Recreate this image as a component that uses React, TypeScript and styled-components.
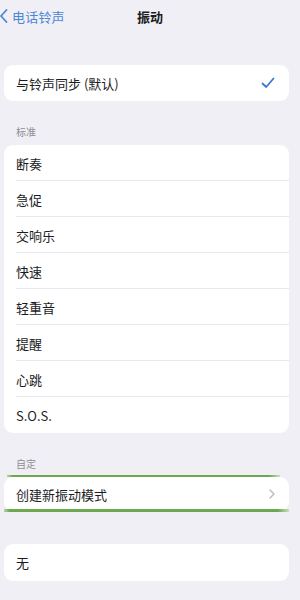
import styled, { createGlobalStyle } from "styled-components";

const GlobalStyle = createGlobalStyle`
  html, body {
    margin: 0;
    padding: 0;
    background: #f0eff5;
  }
  body {
    font-family: "Noto Sans CJK SC", "Liberation Sans", sans-serif;
    -webkit-font-smoothing: antialiased;
  }
`;

const Page = styled.div`
  width: 300px;
  height: 600px;
  overflow: hidden;
  background: #f0eff5;
  display: flex;
  flex-direction: column;
  padding: 0 11px 0 4px;
  box-sizing: border-box;
`;

const NavBar = styled.div`
  height: 32px;
  display: flex;
  align-items: center;
  position: relative;
  margin-left: -4px;
`;

const BackLink = styled.div`
  display: flex;
  align-items: center;
  gap: 4px;
  color: #4a86d6;
  font-size: 13px;
  letter-spacing: 0.2px;
`;

const NavTitle = styled.div`
  position: absolute;
  left: 0;
  right: -11px;
  text-align: center;
  font-size: 13px;
  font-weight: 700;
  color: #1c1c1e;
  pointer-events: none;
`;

const Card = styled.div<{ $top: number }>`
  margin-top: ${(p) => p.$top}px;
  background: #ffffff;
  border-radius: 9px;
  overflow: hidden;
`;

const Row = styled.div<{ $h?: number }>`
  height: ${(p) => p.$h ?? 36}px;
  display: flex;
  align-items: center;
  padding: 0 14px 0 12px;
  position: relative;
  font-size: 13px;
  color: #1c1c1e;

  & + & {
    border-top: 1px solid #e8e8ed;
    margin-left: 12px;
    padding-left: 0;
    margin-top: -1px;
  }
`;

const Label = styled.span`
  flex: 1;
`;

const SectionHeader = styled.div<{ $top: number; $bottom?: number }>`
  margin-top: ${(p) => p.$top}px;
  margin-bottom: ${(p) => p.$bottom ?? 6}px;
  padding-left: 12px;
  height: 14px;
  line-height: 14px;
  font-size: 10px;
  color: #8e8e93;
`;

const Highlighted = styled.div`
  display: flex;
  flex-direction: column;
`;

const Stroke = styled.div<{ $edge: "top" | "bottom" }>`
  flex: none;
  position: relative;
  z-index: 2;
  height: ${(p) => (p.$edge === "top" ? 2 : 3)}px;
  margin: ${(p) => (p.$edge === "top" ? "0 9px 0 3px" : "-2px 0 0 0")};
  background: linear-gradient(
    to right,
    #b7d6a4 0%,
    #6ba84f 2%,
    #6ba84f 96%,
    #c9e0bb 100%
  );
`;

const Check = () => (
  <svg width="14" height="12" viewBox="0 0 14 12">
    <path
      d="M1.5 6.5 L5.2 10 L12.5 1.5"
      fill="none"
      stroke="#3a78d0"
      strokeWidth="1.8"
      strokeLinecap="round"
      strokeLinejoin="round"
    />
  </svg>
);

const Chevron = () => (
  <svg width="6" height="10" viewBox="0 0 6 10">
    <path
      d="M1 1 L5 5 L1 9"
      fill="none"
      stroke="#b9b9be"
      strokeWidth="1.4"
      strokeLinecap="round"
      strokeLinejoin="round"
    />
  </svg>
);

const BackChevron = () => (
  <svg width="8" height="14" viewBox="0 0 8 14">
    <path
      d="M6.5 1 L1 7 L6.5 13"
      fill="none"
      stroke="#4a86d6"
      strokeWidth="1.8"
      strokeLinecap="round"
      strokeLinejoin="round"
    />
  </svg>
);

const standard = ["断奏", "急促", "交响乐", "快速", "轻重音", "提醒", "心跳", "S.O.S."];

export default function App() {
  return (
    <>
      <GlobalStyle />
      <Page>
        <NavBar>
          <BackLink>
            <BackChevron />
            <span>电话铃声</span>
          </BackLink>
          <NavTitle>振动</NavTitle>
        </NavBar>

        <Card $top={33}>
          <Row>
            <Label>与铃声同步 (默认)</Label>
            <Check />
          </Row>
        </Card>

        <SectionHeader $top={24}>标准</SectionHeader>
        <Card $top={0}>
          {standard.map((s) => (
            <Row key={s}>
              <Label>{s}</Label>
            </Row>
          ))}
        </Card>

        <SectionHeader $top={24} $bottom={4}>自定</SectionHeader>
        <Highlighted>
          <Stroke $edge="top" />
          <Card $top={0}>
            <Row $h={34}>
              <Label>创建新振动模式</Label>
              <Chevron />
            </Row>
          </Card>
          <Stroke $edge="bottom" />
        </Highlighted>

        <Card $top={32}>
          <Row $h={37}>
            <Label>无</Label>
          </Row>
        </Card>
      </Page>
    </>
  );
}
